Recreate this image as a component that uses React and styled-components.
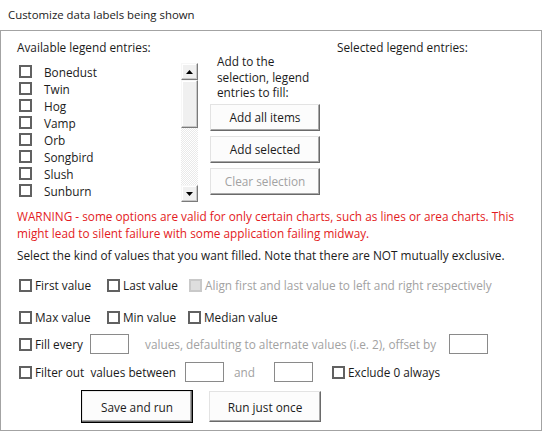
import React from 'react';
import styled, { createGlobalStyle } from 'styled-components';

const Global = createGlobalStyle`
  html, body { margin: 0; padding: 0; background: #fff; }
  body {
    font-family: "Open Sans", "Noto Sans", sans-serif;
    font-size: 11.8px;
    color: #1b1b1b;
  }
`;

const Page = styled.div`
  width: 544px;
  height: 433px;
  background: #fff;
  overflow: hidden;
`;

const Title = styled.div`
  height: 30px;
  line-height: 30px;
  padding-left: 8px;
  font-size: 11.4px;
`;

const Frame = styled.div`
  box-sizing: border-box;
  width: 542px;
  height: 401px;
  border: 1px solid #a3a3a3;
  padding-top: 8px;
`;

const TopArea = styled.div`
  display: flex;
  padding-left: 16px;
`;

const LeftCol = styled.div`
  width: 181px;
  display: flex;
  flex-direction: column;
`;

const Heading = styled.div`
  height: 16px;
  line-height: 16px;
  white-space: nowrap;
`;

const ListBox = styled.div`
  margin-top: 8px;
  display: flex;
  height: 139px;
`;

const List = styled.div`
  width: 164px;
  display: flex;
  flex-direction: column;
`;

const ListRow = styled.label`
  height: 17px;
  display: flex;
  align-items: center;
  padding-left: 2px;
  gap: 12px;
`;

const Box = styled.span`
  box-sizing: border-box;
  width: 13px;
  height: 13px;
  flex: none;
  border: 2px solid ${p => (p.$disabled ? '#c9c9c9' : '#616161')};
  background: ${p => (p.$disabled ? '#dedede' : '#fff')};
`;

const Scrollbar = styled.div`
  width: 17px;
  display: flex;
  flex-direction: column;
  background-color: #fff;
  background-image: conic-gradient(#e9e9e9 25%, transparent 0 50%, #e9e9e9 0 75%, transparent 0);
  background-size: 2px 2px;
`;

const ScrollBtn = styled.div`
  box-sizing: border-box;
  height: 17px;
  flex: none;
  background: #f0f0f0;
  border-top: 1px solid #f7f7f7;
  border-left: 1px solid #f7f7f7;
  border-right: 1px solid #7a7a7a;
  border-bottom: 1px solid #7a7a7a;
  box-shadow: inset -1px -1px #c8c8c8, inset 1px 1px #fff;
  display: flex;
  align-items: center;
  justify-content: center;
`;

const Thumb = styled(ScrollBtn)`
  height: 48px;
`;

const Track = styled.div`
  flex: 1;
`;

const Arrow = ({ down }) => (
  <svg width="7" height="4" viewBox="0 0 7 4">
    <path d={down ? 'M0 0h7L3.5 4z' : 'M0 4h7L3.5 0z'} fill="#000" />
  </svg>
);

const MiddleCol = styled.div`
  margin-left: 12px;
  width: 110px;
  display: flex;
  flex-direction: column;
`;

const Intro = styled.div`
  margin-top: 15px;
  padding-left: 7px;
  line-height: 15.5px;
  white-space: nowrap;
`;

const ButtonStack = styled.div`
  margin-top: 3px;
  display: flex;
  flex-direction: column;
  gap: 5px;
`;

const Button = styled.button`
  box-sizing: border-box;
  width: ${p => p.$w || 110}px;
  height: ${p => p.$h || 27}px;
  margin: 0;
  padding: 0;
  font: inherit;
  color: ${p => (p.disabled ? '#a2a2a2' : '#1b1b1b')};
  background: #fcfcfc;
  border-top: 1px solid #e3e3e3;
  border-left: 1px solid #e3e3e3;
  border-right: 1px solid #6a6a6a;
  border-bottom: 1px solid #6a6a6a;
  box-shadow: inset -1px -1px #a8a8a8;
`;

const DefaultButton = styled(Button)`
  border: 1px solid #000;
  box-shadow: inset -1px -1px #6a6a6a, inset -2px -2px #a8a8a8, inset 1px 1px #e8e8e8;
`;

const RightCol = styled.div`
  margin-left: 17px;
`;

const Warning = styled.div`
  margin-top: 6px;
  padding-left: 16px;
  color: #e31b23;
  line-height: 17px;
  white-space: nowrap;
`;

const Note = styled.div`
  margin-top: 5px;
  padding-left: 16px;
  line-height: 16px;
  white-space: nowrap;
`;

const OptRow = styled.div`
  margin-top: ${p => p.$mt}px;
  height: 20px;
  display: flex;
  align-items: center;
  padding-left: 18px;
  white-space: nowrap;
`;

const Check = styled.label`
  display: flex;
  align-items: center;
  gap: 3px;
  width: ${p => (p.$w ? `${p.$w}px` : 'auto')};
  margin-left: ${p => p.$ml || 0}px;
  flex: none;
  color: ${p => (p.$disabled ? '#a2a2a2' : 'inherit')};
`;

const Field = styled.span`
  box-sizing: border-box;
  width: 39px;
  height: 20px;
  flex: none;
  border: 1px solid #8a8a8a;
  background: #fff;
  margin-left: ${p => p.$ml || 0}px;
`;

const GrayText = styled.span`
  color: #a2a2a2;
  width: ${p => p.$w}px;
  margin-left: ${p => p.$ml || 0}px;
  flex: none;
`;

const ActionRow = styled.div`
  margin-top: 8px;
  padding-left: 80px;
  display: flex;
  align-items: flex-start;
  gap: 16px;
`;

const items = ['Bonedust', 'Twin', 'Hog', 'Vamp', 'Orb', 'Songbird', 'Slush', 'Sunburn'];

export default function App() {
  return (
    <Page>
      <Global />
      <Title>Customize data labels being shown</Title>
      <Frame>
        <TopArea>
          <LeftCol>
            <Heading>Available legend entries:</Heading>
            <ListBox>
              <List>
                {items.map(it => (
                  <ListRow key={it}>
                    <Box />
                    <span>{it}</span>
                  </ListRow>
                ))}
              </List>
              <Scrollbar>
                <ScrollBtn><Arrow /></ScrollBtn>
                <Thumb />
                <Track />
                <ScrollBtn><Arrow down /></ScrollBtn>
              </Scrollbar>
            </ListBox>
          </LeftCol>
          <MiddleCol>
            <Intro>
              Add to the<br />selection, legend<br />entries to fill:
            </Intro>
            <ButtonStack>
              <Button>Add all items</Button>
              <Button>Add selected</Button>
              <Button disabled>Clear selection</Button>
            </ButtonStack>
          </MiddleCol>
          <RightCol>
            <Heading>Selected legend entries:</Heading>
          </RightCol>
        </TopArea>
        <Warning>
          WARNING - some options are valid for only certain charts, such as lines or area charts. This
          <br />might lead to silent failure with some application failing midway.
        </Warning>
        <Note>Select the kind of values that you want filled. Note that there are NOT mutually exclusive.</Note>
        <OptRow $mt={12}>
          <Check $w={88}><Box />First value</Check>
          <Check $w={82}><Box />Last value</Check>
          <Check $disabled><Box $disabled />Align first and last value to left and right respectively</Check>
        </OptRow>
        <OptRow $mt={12}>
          <Check $w={88}><Box />Max value</Check>
          <Check $w={81}><Box />Min value</Check>
          <Check><Box />Median value</Check>
        </OptRow>
        <OptRow $mt={7}>
          <Check $w={71}><Box />Fill every</Check>
          <Field />
          <GrayText $ml={16} $w={304}>values, defaulting to alternate values (i.e. 2), offset by</GrayText>
          <Field />
        </OptRow>
        <OptRow $mt={8}>
          <Check $w={166}><Box />Filter out&nbsp; values between</Check>
          <Field />
          <GrayText $ml={10} $w={40}>and</GrayText>
          <Field />
          <Check $ml={19}><Box />Exclude 0 always</Check>
        </OptRow>
        <ActionRow>
          <DefaultButton $w={112} $h={33}>Save and run</DefaultButton>
          <Button $w={112} $h={31} style={{ marginTop: 1 }}>Run just once</Button>
        </ActionRow>
      </Frame>
    </Page>
  );
}
